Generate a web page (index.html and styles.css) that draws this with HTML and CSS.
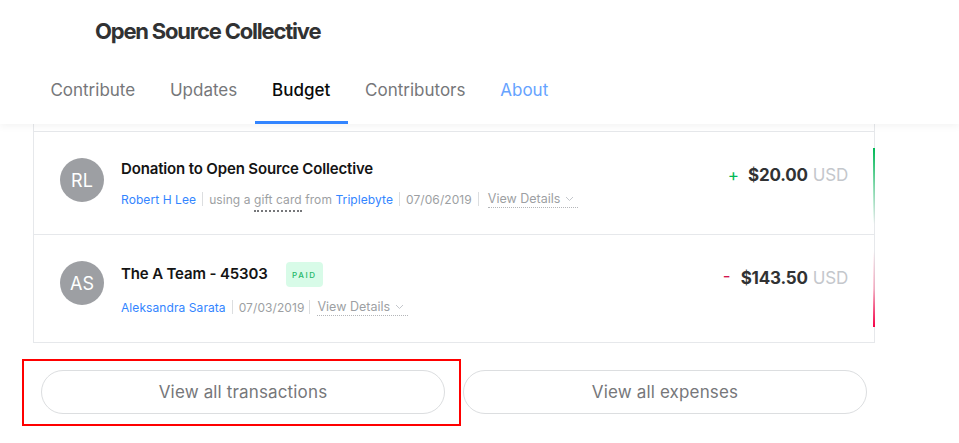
FILE: index.html
```html
<!DOCTYPE html>
<html lang="en">
<head>
<meta charset="utf-8">
<title>Open Source Collective - Budget</title>
<link rel="stylesheet" href="styles.css">
</head>
<body>
<header class="header">
  <div class="brand">Open Source Collective</div>
  <nav class="tabs">
    <a class="tab">Contribute</a>
    <a class="tab">Updates</a>
    <a class="tab tab-active">Budget</a>
    <a class="tab">Contributors</a>
    <a class="tab tab-about">About</a>
  </nav>
</header>
<main class="content">
  <div class="card">
    <div class="card-top"></div>
    <div class="tx">
      <div class="avatar">RL</div>
      <div class="tx-body">
        <div class="tx-title">Donation to Open Source Collective</div>
        <div class="tx-meta">
          <a class="link">Robert H Lee</a>
          <span class="sep"></span>
          <span class="muted">using a <span class="dotted">gift card</span> from </span>
          <a class="link">Triplebyte</a>
          <span class="sep"></span>
          <span class="muted">07/06/2019</span>
          <span class="sep"></span>
          <span class="details">View Details<svg class="chev" width="9" height="6" viewBox="0 0 9 6"><polyline points="1,1 4.5,4.5 8,1" fill="none" stroke="#c4c7cc" stroke-width="1"/></svg></span>
        </div>
      </div>
      <div class="tx-amount">
        <span class="sign sign-plus">+</span>
        <span class="value">$20.00</span>
        <span class="currency">USD</span>
      </div>
      <span class="bar bar-credit"></span>
    </div>
    <div class="tx">
      <div class="avatar">AS</div>
      <div class="tx-body">
        <div class="tx-title">The A Team - 45303 <span class="badge">PAID</span></div>
        <div class="tx-meta">
          <a class="link">Aleksandra Sarata</a>
          <span class="sep"></span>
          <span class="muted">07/03/2019</span>
          <span class="sep sep-tight"></span>
          <span class="details">View Details<svg class="chev" width="9" height="6" viewBox="0 0 9 6"><polyline points="1,1 4.5,4.5 8,1" fill="none" stroke="#c4c7cc" stroke-width="1"/></svg></span>
        </div>
      </div>
      <div class="tx-amount">
        <span class="sign sign-minus">-</span>
        <span class="value">$143.50</span>
        <span class="currency">USD</span>
      </div>
      <span class="bar bar-debit"></span>
    </div>
  </div>
  <div class="actions">
    <div class="action">
      <button class="btn">View all transactions</button>
      <span class="highlight"></span>
    </div>
    <div class="action">
      <button class="btn">View all expenses</button>
    </div>
  </div>
</main>
</body>
</html>
```
FILE: styles.css
```css
* { box-sizing: border-box; }
html, body { margin: 0; padding: 0; background: #fff; }
body {
  font-family: Inter, "Noto Sans", sans-serif;
  color: #313233;
  width: 959px;
  height: 443px;
  overflow: hidden;
}
a { text-decoration: none; cursor: pointer; }

.header {
  position: relative;
  z-index: 2;
  background: #fff;
  height: 124px;
  box-shadow: 0 3px 7px rgba(0, 0, 0, 0.045);
  display: flex;
  flex-direction: column;
}
.brand {
  height: 60px;
  padding: 2px 0 0 95px;
  display: flex;
  align-items: center;
  font-size: 22px;
  font-weight: 700;
  letter-spacing: -1.2px;
  color: #313233;
}
.tabs {
  display: flex;
  padding-left: 33px;
  height: 64px;
}
.tab {
  display: flex;
  align-items: center;
  padding: 0 17.4px 1px;
  border-bottom: 3px solid transparent;
  font-size: 17px;
  color: #76777a;
}
.tab-active {
  color: #090a0a;
  font-weight: 500;
  border-bottom-color: #3385ff;
}
.tab-about { color: #66a3ff; }

.content { padding: 0 0 0 33px; }
.card {
  width: 842px;
  border: 1px solid #e6e8eb;
  border-top: none;
}
.card-top { height: 7px; }
.tx {
  position: relative;
  display: flex;
  align-items: flex-start;
  border-top: 1px solid #e6e8eb;
  padding: 24px 26px 25px 26px;
}
.avatar {
  flex: none;
  width: 44px;
  height: 44px;
  border-radius: 50%;
  background: #9d9fa3;
  color: #fff;
  font-size: 18px;
  display: flex;
  align-items: center;
  justify-content: center;
  margin-top: 2px;
}
.tx-body {
  flex: 1;
  margin-left: 17px;
}
.tx-title {
  display: flex;
  align-items: center;
  min-height: 24px;
  font-size: 15px;
  font-weight: 600;
  color: #141414;
  letter-spacing: -0.15px;
}
.badge {
  margin: 3px 0 1px 18px;
  height: 25px;
  padding: 0 6.5px 0 6.5px;
  display: inline-flex;
  align-items: center;
  border-radius: 4px;
  background: #d8fbe8;
  color: #25b869;
  font-size: 8px;
  font-weight: 500;
  letter-spacing: 1.6px;
}
.tx-meta {
  display: flex;
  align-items: center;
  height: 20px;
  margin-top: 9px;
  font-size: 12px;
  letter-spacing: 0.08px;
  white-space: pre;
}
.link { color: #3385ff; }
.muted { color: #9d9fa3; }
.dotted {
  border-bottom: 2px dotted #76777a;
  padding-bottom: 3px;
}
.sep {
  display: inline-block;
  width: 1px;
  height: 14px;
  background: #dcdee0;
  margin: 0 6px;
}
.sep-tight { margin: 0 4px 0 5px; }
.details {
  color: #9d9fa3;
  font-size: 12.5px;
  letter-spacing: 0;
  margin-left: 3px;
  border-bottom: 1px dotted #b4b6b9;
  padding: 0 4px 1px 0;
  display: inline-flex;
  align-items: center;
}
.chev { margin-left: 5px; margin-top: 2px; }

.tx-amount {
  display: flex;
  align-items: center;
  margin-top: 7px;
  height: 24px;
  font-size: 17px;
}
.sign {
  font-size: 17px;
  margin-right: 9px;
}
.sign-plus { color: #00b856; }
.sign-minus { color: #d3154f; margin-top: -5px; margin-right: 10px; }
.value { font-weight: 700; color: #313233; letter-spacing: -0.2px; }
.currency { color: #c4c7cc; margin-left: 5px; letter-spacing: -0.2px; }

.bar {
  position: absolute;
  right: -1px;
  top: 16px;
  width: 2px;
  height: 76px;
}
.bar-credit { background: linear-gradient(to bottom, #00b856 0%, rgba(0, 184, 86, 0.45) 50%, rgba(0, 184, 86, 0) 100%); }
.bar-debit { background: linear-gradient(to bottom, rgba(245, 0, 70, 0) 0%, rgba(245, 0, 70, 0.25) 50%, #f50046 100%); }

.actions {
  display: flex;
  gap: 18px;
  width: 842px;
  padding: 0 8px;
  margin-top: 27px;
}
.action {
  position: relative;
  flex: 1;
}
.btn {
  width: 100%;
  height: 44px;
  border: 1px solid #dcdee0;
  border-radius: 22px;
  background: #fff;
  font-family: Inter, "Noto Sans", sans-serif;
  font-size: 17px;
  color: #76777a;
  letter-spacing: 0.15px;
  cursor: pointer;
}
.highlight {
  position: absolute;
  left: -19px;
  right: -16px;
  top: -11px;
  bottom: -12px;
  border: 2px solid #ff0000;
  pointer-events: none;
}
```
